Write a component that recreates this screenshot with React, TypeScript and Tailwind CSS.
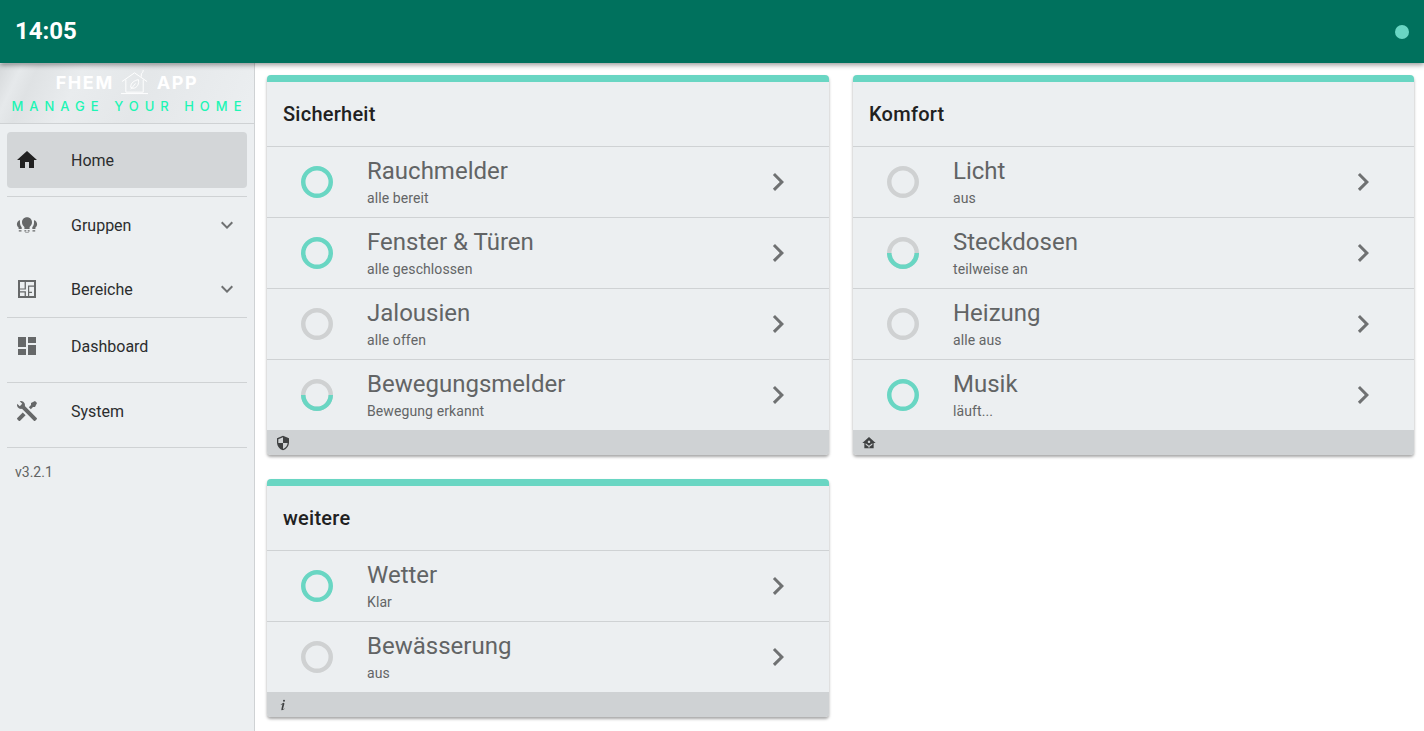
const P = {
  home: "M10,20V14H14V20H19V12H22L12,3L2,12H5V20H10Z",
  dash: "M13,3V9H21V3M13,21H21V11H13M3,21H11V15H3M3,13H11V3H3V13Z",
  tools: "M21.71 20.29L20.29 21.71A1 1 0 0 1 18.88 21.71L7 9.85A3.81 3.81 0 0 1 6 10A4 4 0 0 1 2.22 4.7L4.76 7.24L5.29 6.71L6.71 5.29L7.24 4.76L4.7 2.22A4 4 0 0 1 10 6A3.81 3.81 0 0 1 9.85 7L21.71 18.88A1 1 0 0 1 21.71 20.29M2.29 18.88A1 1 0 0 0 2.29 20.29L3.71 21.71A1 1 0 0 0 5.12 21.71L10.59 16.25L7.76 13.42M20 2L16 4V6L13.83 8.17L15.83 10.17L18 8H20L22 4Z",
  plan: "M3 3H21V21H3ZM5 5H19V19H5ZM9.6 5H10.9V12.6H9.6ZM5 11.4H9.6V12.6H5ZM5 14.2H10.9V15.4H5ZM9.6 15.4H10.9V19H9.6ZM13 8.6H19V9.8H13ZM13 9.8H14.2V15.4H13ZM13 15.4H14.2V19H13ZM14.2 14.8H17V16H14.2Z",
  bulbs: "M12 4.2C9 4.2 7 6.4 7 9.2C7 11.2 8.1 12.7 9.4 13.9V16H14.6V13.9C15.9 12.7 17 11.2 17 9.2C17 6.4 15 4.2 12 4.2M9.4 17.2V18.4H11.3V17.2M12.7 17.2V18.4H14.6V17.2M10.2 19.4V20H13.8V19.4M4.8 6.9C3 7.8 1.9 9.5 1.9 11.2C1.9 12.6 2.6 13.7 3.6 14.5V16H6.7V14.2C5.7 13 5 11.5 5 10C5 9 5.1 7.9 4.8 6.9M19.2 6.9C18.9 7.9 19 9 19 10C19 11.5 18.3 13 17.3 14.2V16H20.4V14.5C21.4 13.7 22.1 12.6 22.1 11.2C22.1 9.5 21 7.8 19.2 6.9M3.8 17.2V18.4H6.5V17.2M17.5 17.2V18.4H20.2V17.2",
  chevDown: "M7.41,8.58L12,13.17L16.59,8.58L18,10L12,16L6,10L7.41,8.58Z",
  chevRight: "M8.59,16.58L13.17,12L8.59,7.41L10,6L16,12L10,18L8.59,16.58Z",
  shield: "M12,1L3,5V11C3,16.55 6.84,21.74 12,23C17.16,21.74 21,16.55 21,11V5L12,1M12,11.99H19C18.47,16.11 15.72,19.78 12,20.93V12H5V6.3L12,3.19V11.99Z",
  houseAuto: "M12 3L2 12H5V20H19V12H22L12 3M7 12.5L12 16L17 12.5V14.5L12.7 17.5V19H11.3V17.5L7 14.5ZM12 8.3A1.9 1.9 0 1 0 12.01 8.3Z",
  info: "M13.5,4A1.5,1.5 0 0,0 12,5.5A1.5,1.5 0 0,0 13.5,7A1.5,1.5 0 0,0 15,5.5A1.5,1.5 0 0,0 13.5,4M13.14,8.77C11.95,8.87 8.7,11.46 8.7,11.46C8.5,11.61 8.56,11.6 8.72,11.88C8.88,12.15 8.86,12.17 9.05,12.04C9.25,11.91 9.58,11.7 10.13,11.36C12.25,10 10.47,13.14 9.56,18.43C9.2,21.05 11.56,19.7 12.17,19.3C12.77,18.91 14.38,17.8 14.54,17.69C14.76,17.54 14.6,17.42 14.43,17.17C14.31,17 14.19,17.12 14.19,17.12C13.54,17.55 12.35,18.45 12.19,17.88C12,17.31 13.22,13.4 13.89,10.71C14,10.07 14.3,8.67 13.14,8.77Z",
};

function Icon({ d, className }: { d: string; className: string }) {
  return (
    <svg viewBox="0 0 24 24" className={className} fill="currentColor" fillRule="evenodd">
      <path d={d} />
    </svg>
  );
}

type Level = "on" | "off" | "half";

function Ring({ level }: { level: Level }) {
  const teal = "#69d6c3";
  const gray = "#cfd1d2";
  return (
    <svg viewBox="0 0 32 32" className="w-8 h-8 shrink-0" fill="none" strokeWidth="4.5">
      <circle cx="16" cy="16" r="13.75" stroke={level === "on" ? teal : gray} />
      {level === "half" && <path d="M2.25 16A13.75 13.75 0 0 0 29.75 16" stroke={teal} />}
    </svg>
  );
}

function Row({ title, sub, level }: { title: string; sub: string; level: Level }) {
  return (
    <div className="h-[71px] border-t border-[#cfd2d4] flex items-center pl-[34px] pr-[33px] gap-[34px]">
      <Ring level={level} />
      <div className="flex-1 flex flex-col">
        <div className="text-2xl leading-7 text-[#626465]">{title}</div>
        <div className="text-sm leading-5 mt-[3px] tracking-[0.1px] text-[#636566]">{sub}</div>
      </div>
      <Icon d={P.chevRight} className="w-9 h-9 mb-px text-[#6f7172]" />
    </div>
  );
}

function Card({
  title,
  icon,
  rows,
}: {
  title: string;
  icon: string;
  rows: { title: string; sub: string; level: Level }[];
}) {
  return (
    <section className="bg-[#eceff1] rounded border-t-[7px] border-[#69d6c3] shadow-[0_2px_3px_rgba(0,0,0,0.35)] overflow-hidden">
      <h2 className="h-16 flex items-center px-4 text-xl font-medium tracking-[0.25px] text-[#212121]">{title}</h2>
      {rows.map((r) => (
        <Row key={r.title} {...r} />
      ))}
      <div className="h-[25px] bg-[#cfd2d4] flex items-center pl-[8px]">
        <Icon d={icon} className="w-4 h-4 text-[#3f4142]" />
      </div>
    </section>
  );
}

function Divider() {
  return <div className="h-px mx-[7px] bg-[#cfd2d4]" />;
}

function NavItem({
  icon,
  label,
  active,
  chevron,
}: {
  icon: string;
  label: string;
  active?: boolean;
  chevron?: boolean;
}) {
  return (
    <div
      className={
        "h-14 mx-[7px] mb-2 rounded flex items-center pl-2 pr-2 " + (active ? "bg-[#d3d6d8]" : "")
      }
    >
      <Icon d={icon} className={"w-6 h-6 shrink-0 " + (active ? "text-[#212121]" : "text-[#666869]")} />
      <span className="ml-8 pt-0.5 flex-1 text-base text-[#2b2d2e]">{label}</span>
      {chevron && <Icon d={P.chevDown} className="w-6 h-6 text-[#6f7172]" />}
    </div>
  );
}

function Logo() {
  return (
    <div className="h-[60px] border-b border-[#cfd2d4] bg-[linear-gradient(115deg,#d5d8da_0%,#e6e9eb_8%,#dfe2e4_14%,#e9ecee_30%,#e4e7e9_55%,#eceff1_100%)] flex flex-col items-center overflow-hidden">
      <div className="h-[35px] pt-[2px] flex items-center gap-[7px] text-white font-bold text-[18px] tracking-[1.6px] font-['Inter',sans-serif]">
        <span>FHEM</span>
        <svg viewBox="0 0 30 28" className="w-[29px] h-[27px]" fill="none" stroke="#ffffff" strokeWidth="1">
          <path d="M1 13L14 4L27 13M5 11V24H23V11M0 25.5H28M21 5V8M21 5C22 4 23 3 23 1" />
          <path d="M10 19C10 14 14 12 18 11C19 15 17 20 12 20ZM10 21L15 15" />
        </svg>
        <span>APP</span>
      </div>
      <div className="text-[13px] leading-[14px] tracking-[6px] pl-[5px] font-medium text-[#1df5b4] whitespace-nowrap font-['Inter',sans-serif]">
        MANAGE YOUR HOME
      </div>
    </div>
  );
}

export default function App() {
  return (
    <div className="h-screen flex flex-col overflow-hidden bg-white font-['Roboto',sans-serif]">
      <header className="relative z-10 h-[63px] shrink-0 bg-[#00715d] shadow-[0_2px_5px_rgba(0,0,0,0.4)] flex items-center justify-between pl-[15px] pr-[15px]">
        <div className="text-2xl font-bold pb-0.5 text-white">14:05</div>
        <div className="w-3.5 h-3.5 rounded-full bg-[#69d6c3]" />
      </header>
      <div className="flex-1 flex min-h-0">
        <aside className="w-[255px] shrink-0 bg-[#eceff1] border-r border-[#cfd2d4] pt-px">
          <Logo />
          <div className="h-2" />
          <NavItem icon={P.home} label="Home" active />
          <Divider />
          <NavItem icon={P.bulbs} label="Gruppen" chevron />
          <NavItem icon={P.plan} label="Bereiche" chevron />
          <div className="-mt-2" />
          <Divider />
          <NavItem icon={P.dash} label="Dashboard" />
          <Divider />
          <NavItem icon={P.tools} label="System" />
          <Divider />
          <div className="pl-[15px] h-12 flex items-center text-sm text-[#616363]">v3.2.1</div>
        </aside>
        <main className="flex-1 pl-3 pt-3">
          <div className="grid grid-cols-[562px_561px] gap-x-6 gap-y-6 items-start">
            <Card
              title="Sicherheit"
              icon={P.shield}
              rows={[
                { title: "Rauchmelder", sub: "alle bereit", level: "on" },
                { title: "Fenster & Türen", sub: "alle geschlossen", level: "on" },
                { title: "Jalousien", sub: "alle offen", level: "off" },
                { title: "Bewegungsmelder", sub: "Bewegung erkannt", level: "half" },
              ]}
            />
            <Card
              title="Komfort"
              icon={P.houseAuto}
              rows={[
                { title: "Licht", sub: "aus", level: "off" },
                { title: "Steckdosen", sub: "teilweise an", level: "half" },
                { title: "Heizung", sub: "alle aus", level: "off" },
                { title: "Musik", sub: "läuft...", level: "on" },
              ]}
            />
            <Card
              title="weitere"
              icon={P.info}
              rows={[
                { title: "Wetter", sub: "Klar", level: "on" },
                { title: "Bewässerung", sub: "aus", level: "off" },
              ]}
            />
          </div>
        </main>
      </div>
    </div>
  );
}
